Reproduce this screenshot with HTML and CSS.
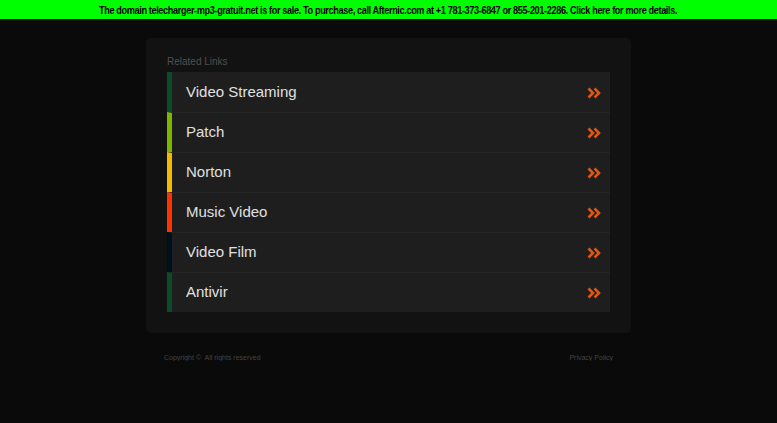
FILE: index.html
```html
<!DOCTYPE html>
<html>
<head>
<meta charset="utf-8">
<link rel="stylesheet" href="styles.css">
</head>
<body>
<div class="topbar"><span class="topbar-text">The domain telecharger-mp3-gratuit.net is for sale. To purchase, call Afternic.com at +1 781-373-6847 or 855-201-2286. Click here for more details.</span></div>
<main class="wrap">
  <section class="panel">
    <div class="heading">Related Links</div>
    <ul class="links">
      <li class="link c1"><span>Video Streaming</span><svg class="arr" viewBox="0 0 14 12" width="14" height="12"><path d="M1.5 1.5 L6 6 L1.5 10.5 M7.5 1.5 L12 6 L7.5 10.5" fill="none" stroke="#e0550f" stroke-width="2.6"/></svg></li>
      <li class="link c2"><span>Patch</span><svg class="arr" viewBox="0 0 14 12" width="14" height="12"><path d="M1.5 1.5 L6 6 L1.5 10.5 M7.5 1.5 L12 6 L7.5 10.5" fill="none" stroke="#e0550f" stroke-width="2.6"/></svg></li>
      <li class="link c3"><span>Norton</span><svg class="arr" viewBox="0 0 14 12" width="14" height="12"><path d="M1.5 1.5 L6 6 L1.5 10.5 M7.5 1.5 L12 6 L7.5 10.5" fill="none" stroke="#e0550f" stroke-width="2.6"/></svg></li>
      <li class="link c4"><span>Music Video</span><svg class="arr" viewBox="0 0 14 12" width="14" height="12"><path d="M1.5 1.5 L6 6 L1.5 10.5 M7.5 1.5 L12 6 L7.5 10.5" fill="none" stroke="#e0550f" stroke-width="2.6"/></svg></li>
      <li class="link c5"><span>Video Film</span><svg class="arr" viewBox="0 0 14 12" width="14" height="12"><path d="M1.5 1.5 L6 6 L1.5 10.5 M7.5 1.5 L12 6 L7.5 10.5" fill="none" stroke="#e0550f" stroke-width="2.6"/></svg></li>
      <li class="link c6"><span>Antivir</span><svg class="arr" viewBox="0 0 14 12" width="14" height="12"><path d="M1.5 1.5 L6 6 L1.5 10.5 M7.5 1.5 L12 6 L7.5 10.5" fill="none" stroke="#e0550f" stroke-width="2.6"/></svg></li>
    </ul>
  </section>
  <footer class="foot">
    <span>Copyright ©&nbsp; All rights reserved</span>
    <span>Privacy Policy</span>
  </footer>
</main>
</body>
</html>
```
FILE: styles.css
```css
html, body {
  margin: 0;
  padding: 0;
  background: #0a0a0a;
  font-family: "Liberation Sans", Arial, sans-serif;
}
.topbar {
  background: #00ff00;
  color: #000;
  font-weight: bold;
  font-size: 11px;
  height: 19px;
  line-height: 20px;
  text-align: center;
  white-space: nowrap;
  overflow: hidden;
}
.topbar-text {
  display: inline-block;
  letter-spacing: -0.45px;
  transform: scaleX(0.833);
  transform-origin: center;
}
.wrap {
  width: 485px;
  margin: 19px auto 0 auto;
}
.panel {
  background: #121212;
  border-radius: 5px;
  padding: 18px 21px 21px 21px;
}
.heading {
  color: #505050;
  font-size: 10px;
  line-height: 12px;
  height: 16px;
}
.links {
  list-style: none;
  margin: 0;
  padding: 0;
}
.link {
  display: flex;
  align-items: center;
  justify-content: space-between;
  height: 40px;
  box-sizing: border-box;
  background: #1e1e1e;
  border-left: 5px solid #0a4a2a;
  border-top: 1px solid #242424;
  padding: 0 9px 0 14px;
  color: #e0e0e0;
  font-size: 15px;
}
.link:first-child { border-top: none; }
.link span { margin-top: -2px; }
.c1 { border-left-color: #0b4a2b; }
.c2 { border-left-color: #7ab800; }
.c3 { border-left-color: #f5b800; }
.c4 { border-left-color: #ff3300; }
.c5 { border-left-color: #00101c; }
.c6 { border-left-color: #0b4a2b; }
.arr { display: block; margin-top: 1px; }
.foot {
  display: flex;
  justify-content: space-between;
  padding: 21px 18px 0 18px;
  color: #444;
  font-size: 7px;
}
```
